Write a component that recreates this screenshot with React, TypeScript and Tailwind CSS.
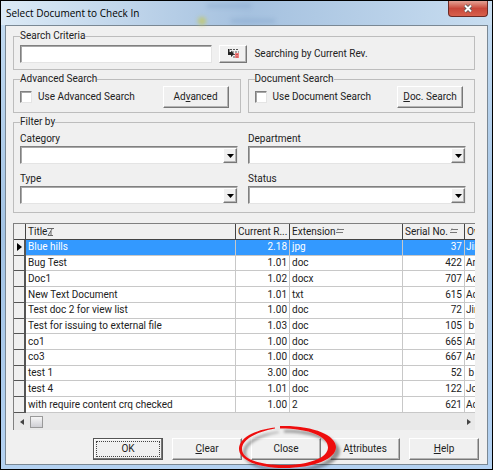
import type { ReactNode } from "react";

interface DocRow {
  title: string;
  rev: string;
  ext: string;
  serial: string;
  owner: string;
}

const DOCS: DocRow[] = [
  { title: "Blue hills", rev: "2.18", ext: "jpg", serial: "37", owner: "Jir" },
  { title: "Bug Test", rev: "1.01", ext: "doc", serial: "422", owner: "Ar" },
  { title: "Doc1", rev: "1.02", ext: "docx", serial: "707", owner: "Ac" },
  { title: "New Text Document", rev: "1.01", ext: "txt", serial: "615", owner: "Ac" },
  { title: "Test doc 2 for view list", rev: "1.00", ext: "doc", serial: "72", owner: "Jir" },
  { title: "Test for issuing to external file", rev: "1.03", ext: "doc", serial: "105", owner: " b" },
  { title: "co1", rev: "1.00", ext: "doc", serial: "665", owner: "Ar" },
  { title: "co3", rev: "1.00", ext: "docx", serial: "667", owner: "Ar" },
  { title: "test 1", rev: "3.00", ext: "doc", serial: "52", owner: " b" },
  { title: "test 4", rev: "1.01", ext: "doc", serial: "122", owner: "Jc" },
  { title: "with require content crq checked", rev: "1.00", ext: "2", serial: "621", owner: "Ac" },
];

const FILTERS = ["Category", "Department", "Type", "Status"];

const RAISED =
  "border border-t-white border-l-white border-r-[#777] border-b-[#777] bg-[#f0f0f0] shadow-[inset_-1px_-1px_0_#b4b4b4]";
const SUNKEN =
  "border border-t-[#808080] border-l-[#808080] border-r-[#e4e4e4] border-b-[#e4e4e4] bg-white shadow-[inset_1px_1px_0_#a8a8a8]";

function Group({ title, className = "", children }: { title: string; className?: string; children: ReactNode }) {
  return (
    <fieldset className={`min-w-0 border border-[#bdbdbd] px-1.5 ${className}`}>
      <legend className="leading-3">{title}</legend>
      {children}
    </fieldset>
  );
}

function SearchToggle({ id, label, children }: { id: string; label: string; children: ReactNode }) {
  return (
    <div className="flex items-center justify-between pr-[5px]">
      <div className="flex items-center gap-1.5">
        <input id={id} type="checkbox" className={`size-3 appearance-none ${SUNKEN}`} />
        <label htmlFor={id}>{label}</label>
      </div>
      <button className={`h-[22px] w-[66px] ${RAISED}`}>{children}</button>
    </div>
  );
}

function FilterSelect({ label }: { label: string }) {
  const id = `filter-${label.toLowerCase()}`;
  return (
    <div className="flex flex-col gap-px">
      <label htmlFor={id} className="leading-3">{label}</label>
      <div className="relative">
        <select id={id} className={`block h-[18px] w-full appearance-none pl-1 ${SUNKEN}`}>
          <option></option>
        </select>
        <span
          className={`pointer-events-none absolute top-0.5 right-px bottom-px flex w-3.5 items-center justify-center ${RAISED}`}
        >
          <svg viewBox="0 0 7 4" className="h-1 w-[7px]">
            <path d="M0 0h7L3.500 4z" fill="#000" />
          </svg>
        </span>
      </div>
    </div>
  );
}

function SortMark() {
  return (
    <svg viewBox="0 0 8 7" className="inline h-[7px] w-2" stroke="#777" fill="none">
      <path d="M1 1.500h7M0 4.500h7M2 .5l-1 2" />
    </svg>
  );
}

function HighlightRing() {
  return (
    <svg
      viewBox="0 0 106 50"
      className="pointer-events-none absolute -top-3.5 -left-3 h-[50px] w-[106px] max-w-none overflow-visible"
    >
      <defs>
        <filter id="ring-shadow" x="-20%" y="-20%" width="140%" height="150%">
          <feDropShadow dx="4" dy="4" stdDeviation="1.500" floodColor="#000" floodOpacity="0.4" />
        </filter>
      </defs>
      <path
        filter="url(#ring-shadow)"
        fill="#ee1111"
        d="M36 3.500C15 6 0 14 0 25c0 11 19 19 45 19 30 0 52-9 52-21C97 11 73 1 41 2l0 2.500c30 0 48 8 48 19 0 10-18 17.500-44 17.500C20 41 3 35 3 25 3 16 16 8 36 4.500z"
      />
    </svg>
  );
}

export default function App() {
  const head = "h-4 border-r border-b border-[#444] bg-[#f0f0f0] p-0 pl-0.5 text-left font-normal whitespace-nowrap";
  const action = `h-[22px] w-[70px] ${RAISED}`;

  return (
    <div className="min-h-screen border border-black bg-linear-to-b from-[#c4dcf2] via-[#a3c3e4] to-[#b4d2f2] font-[Roboto,sans-serif] text-[10px] leading-3 text-[#222]">
      <header className="relative flex h-6 items-center justify-between bg-linear-to-r from-[#dceaf6] via-[#a5c1df] to-[#c8ddf0] pr-1 pl-[5px]">
        <svg viewBox="0 0 120 24" className="pointer-events-none absolute top-0 left-[170px] h-6 w-[120px] blur-[2px]">
          <path d="M36 5h44M60 20h44" stroke="#7296bd" strokeWidth="4" opacity=".3" />
          <circle cx="31" cy="20" r="4" fill="#c3c860" opacity=".8" />
        </svg>
        <h1 className="font-['Open_Sans',sans-serif] text-[10px] text-black">Select Document to Check In</h1>
        <button
          aria-label="Close window"
          className="flex h-4 w-10 items-center justify-center self-start rounded-b-sm border border-t-0 border-[#6b2a25] bg-linear-to-b from-[#e3a195] via-[#c8473a] to-[#d8604c]"
        >
          <svg viewBox="0 0 10 9" className="h-[9px] w-2.5">
            <path d="M2 1.500l6 6M8 1.500l-6 6" stroke="#555" strokeWidth="3.600" />
            <path d="M2 1.500l6 6M8 1.500l-6 6" stroke="#fff" strokeWidth="2" />
          </svg>
        </button>
      </header>

      <main className="mx-1 mb-[3px] border border-[#7a8894] bg-[#f0f0f0] pt-1 pb-1">
        <div className="flex flex-col gap-[3px] pr-3 pl-[7px]">
          <Group title="Search Criteria" className="pt-[3px] pb-1.5">
            <div className="flex items-center gap-[7px]">
              <input aria-label="Search criteria" className={`h-[18px] min-w-0 flex-[187] px-1 ${SUNKEN}`} />
              <button aria-label="Pick search field" className={`flex h-[18px] w-7 items-center justify-center ${RAISED}`}>
                <svg viewBox="0 0 11 10" className="h-2.5 w-[11px]">
                  <path d="M2 .5h9M4 3h7M5 5.500h6M5 8h6" stroke="#555" strokeWidth="1.200" strokeDasharray="2 1" />
                  <path d="M0 0h1.500v3H3V1.500L6 5 3 8V6H0z" fill="#222" />
                  <path d="M7 4h4v5H7z" fill="#f05050" opacity=".7" />
                </svg>
              </button>
              <span className="flex-[219]">Searching by Current Rev.</span>
            </div>
          </Group>

          <div className="grid grid-cols-2 gap-[7px]">
            <Group title="Advanced Search" className="pt-px pb-1">
              <SearchToggle id="use-advanced" label="Use Advanced Search">
                Ad<u>v</u>anced
              </SearchToggle>
            </Group>
            <Group title="Document Search" className="pt-px pb-1">
              <SearchToggle id="use-document" label="Use Document Search">
                <u>D</u>oc. Search
              </SearchToggle>
            </Group>
          </div>

          <Group title="Filter by" className="pt-[5px] pb-2">
            <div className="grid grid-cols-2 gap-x-2.5 gap-y-[9px] pr-0.5">
              {FILTERS.map((f) => (
                <FilterSelect key={f} label={f} />
              ))}
            </div>
          </Group>

          <div className="mt-[7px] overflow-hidden border-t border-l border-[#808080]">
            <table className="h-[189px] w-full table-fixed border-separate border-spacing-0">
              <colgroup>
                <col className="w-3" />
                <col />
                <col className="w-[54px]" />
                <col className="w-[113px]" />
                <col className="w-[62px]" />
                <col className="w-2.5" />
              </colgroup>
              <thead>
                <tr>
                  <th aria-label="Selected" className={head}></th>
                  <th className={head}>
                    Title
                    <svg viewBox="0 0 7 8" className="inline h-2 w-[7px]" stroke="#666" fill="none">
                      <path d="M0 .5h7M5 1L1 7.500h5M4 3v4" />
                    </svg>
                  </th>
                  <th className={head}>Current R...</th>
                  <th className={head}>Extension<SortMark /></th>
                  <th className={head}>Serial No. <SortMark /></th>
                  <th className="overflow-hidden border-b border-[#444] p-0 pl-0.5 text-left font-normal">Ow</th>
                </tr>
              </thead>
              <tbody>
                {DOCS.map((d, i) => {
                  const cell = `border-b border-[#c8c8c8] p-0 whitespace-pre ${i === 0 ? "bg-[#3399ff] text-white" : "bg-white"}`;
                  return (
                    <tr key={d.title}>
                      <td className="border-r-2 border-b border-[#555] bg-[#f0f0f0] p-0">
                        {i === 0 && (
                          <svg viewBox="0 0 5 8" className="ml-[3px] h-2 w-[5px]">
                            <path d="M0 0l5 4-5 4z" fill="#000" />
                          </svg>
                        )}
                      </td>
                      <td className={`${cell} border-r pl-0.5`}>{d.title}</td>
                      <td className={`${cell} border-r pr-0.5 text-right`}>{d.rev}</td>
                      <td className={`${cell} border-r pl-0.5`}>{d.ext}</td>
                      <td className={`${cell} border-r pr-0.5 text-right`}>{d.serial}</td>
                      <td className={`${cell} overflow-hidden pl-px`}>{d.owner}</td>
                    </tr>
                  );
                })}
              </tbody>
            </table>
            <div className="flex h-[17px] items-center gap-1.5 bg-[#e9e9e9] pr-1 pl-1.5">
              <svg viewBox="0 0 4 6" className="h-1.5 w-1"><path d="M4 0v6L0 3z" fill="#444" /></svg>
              <div className="h-3 w-[13px] border border-[#999] bg-linear-to-b from-[#f6f6f6] to-[#cfcfd4]" />
              <svg viewBox="0 0 4 6" className="ml-auto h-1.5 w-1"><path d="M0 0v6l4-3z" fill="#444" /></svg>
            </div>
          </div>
        </div>

        <footer className="mt-2 flex justify-end gap-[9px] pr-2">
          <button className="h-[22px] w-[70px] border border-[#555] bg-[#f0f0f0] p-0.5 shadow-[inset_-1px_-1px_0_#777,inset_1px_1px_0_#fff]">
            <span className="flex h-full items-center justify-center border border-dotted border-[#444]">OK</span>
          </button>
          <button className={action}><u>C</u>lear</button>
          <div className="relative">
            <button className={action}>Close</button>
            <HighlightRing />
          </div>
          <button className={action}>A<u>t</u>tributes</button>
          <button className={action}><u>H</u>elp</button>
        </footer>
      </main>
    </div>
  );
}
